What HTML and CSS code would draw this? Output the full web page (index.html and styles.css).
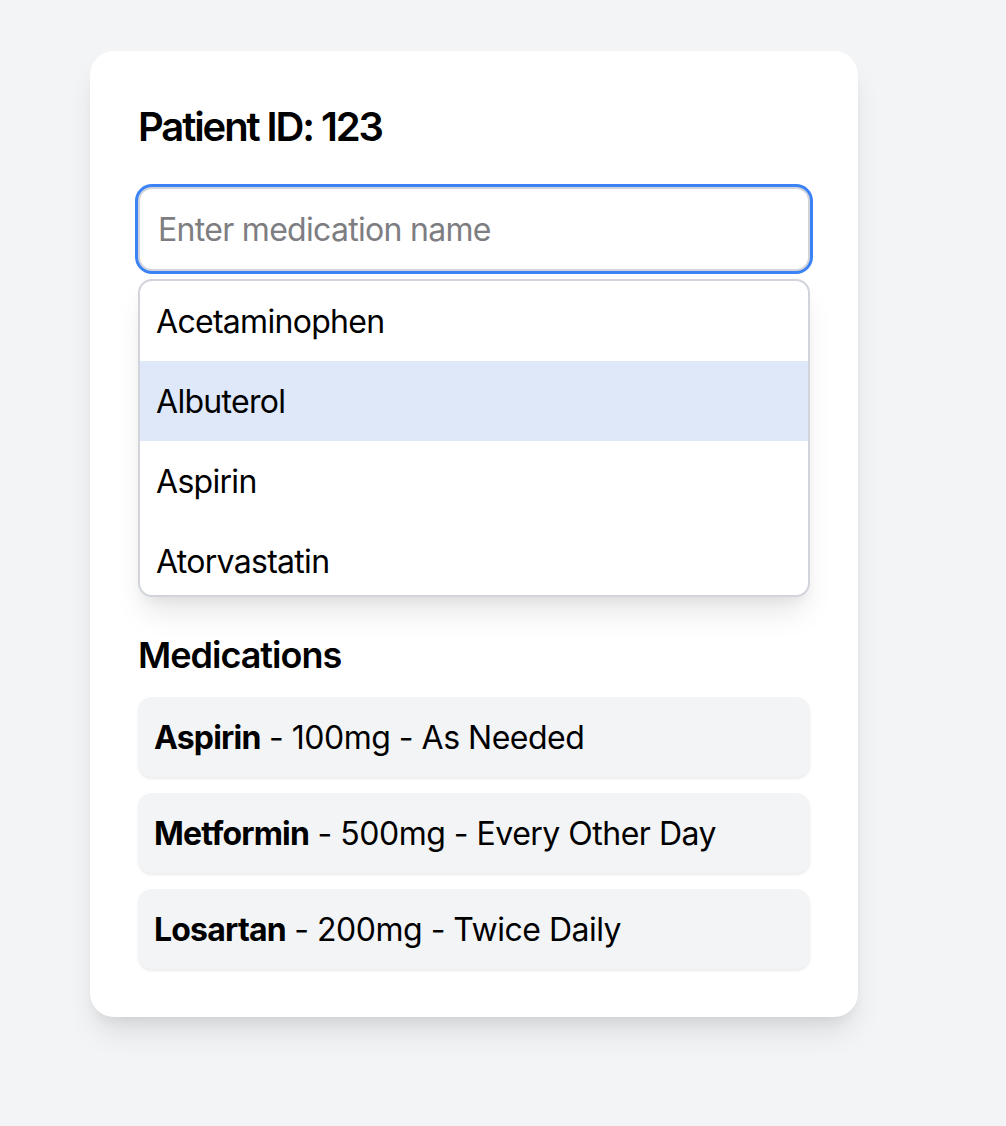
FILE: index.html
```html
<!DOCTYPE html>
<html lang="en">
<head>
<meta charset="utf-8">
<title>Patient Medications</title>
<link rel="stylesheet" href="styles.css">
</head>
<body>
<main class="page">
  <section class="card">
    <h1 class="title">Patient ID: 123</h1>
    <div class="search">
      <input class="search-input" type="text" placeholder="Enter medication name">
      <ul class="dropdown">
        <li class="dropdown-item">Acetaminophen</li>
        <li class="dropdown-item is-active">Albuterol</li>
        <li class="dropdown-item">Aspirin</li>
        <li class="dropdown-item">Atorvastatin</li>
      </ul>
    </div>
    <h2 class="section-title">Medications</h2>
    <ul class="med-list">
      <li class="med-item"><strong>Aspirin</strong> - 100mg - As Needed</li>
      <li class="med-item"><strong>Metformin</strong> - 500mg - Every Other Day</li>
      <li class="med-item"><strong>Losartan</strong> - 200mg - Twice Daily</li>
    </ul>
  </section>
</main>
</body>
</html>
```

FILE: styles.css
```css
* { box-sizing: border-box; }

html, body {
  margin: 0;
  padding: 0;
  background: #f3f4f6;
  font-family: Inter, "Liberation Sans", Arial, sans-serif;
  color: #000;
}

.page {
  padding: 51px 0 0 90px;
  min-height: 1126px;
}

.card {
  width: 768px;
  background: #fff;
  border-radius: 24px;
  padding: 48px;
  box-shadow: 0 20px 30px -6px rgba(0, 0, 0, 0.10), 0 8px 12px -4px rgba(0, 0, 0, 0.06);
}

.title {
  margin: 0 0 32px;
  font-size: 40px;
  line-height: 56px;
  font-weight: 600;
  letter-spacing: -2.1px;
}

.search {
  display: flex;
  flex-direction: column;
  gap: 8px;
}

.search-input {
  display: block;
  width: 100%;
  height: 84px;
  padding: 16px 18px;
  font-family: inherit;
  font-size: 32px;
  line-height: 48px;
  letter-spacing: -0.7px;
  color: #111;
  border: 2px solid #d1d5db;
  border-radius: 14px;
  outline: none;
  box-shadow: 0 0 0 3px #3b82f6;
}

.search-input::placeholder {
  color: #7d7d82;
}

.dropdown {
  list-style: none;
  margin: 0;
  padding: 0;
  height: 318px;
  overflow: hidden;
  border: 2px solid #d1d5db;
  border-radius: 14px;
  background: #fff;
  box-shadow: 0 20px 30px -6px rgba(0, 0, 0, 0.10), 0 8px 12px -4px rgba(0, 0, 0, 0.05);
}

.dropdown-item {
  height: 80px;
  padding: 17px 16px 15px;
  font-size: 32px;
  line-height: 48px;
  letter-spacing: -0.7px;
}

.dropdown-item.is-active {
  background: #dee8f9;
}

.section-title {
  margin: 30px 0 14px;
  font-size: 36px;
  line-height: 56px;
  font-weight: 600;
  letter-spacing: -1px;
}

.med-list {
  list-style: none;
  margin: 0;
  padding: 0;
  display: flex;
  flex-direction: column;
  gap: 16px;
}

.med-item {
  height: 80px;
  padding: 17px 16px 15px;
  font-size: 32px;
  line-height: 48px;
  letter-spacing: -0.5px;
  background: #f3f4f6;
  border-radius: 14px;
  box-shadow: 0 2px 3px rgba(0, 0, 0, 0.08);
}

.med-item strong {
  font-weight: 700;
  letter-spacing: -0.8px;
}
```
